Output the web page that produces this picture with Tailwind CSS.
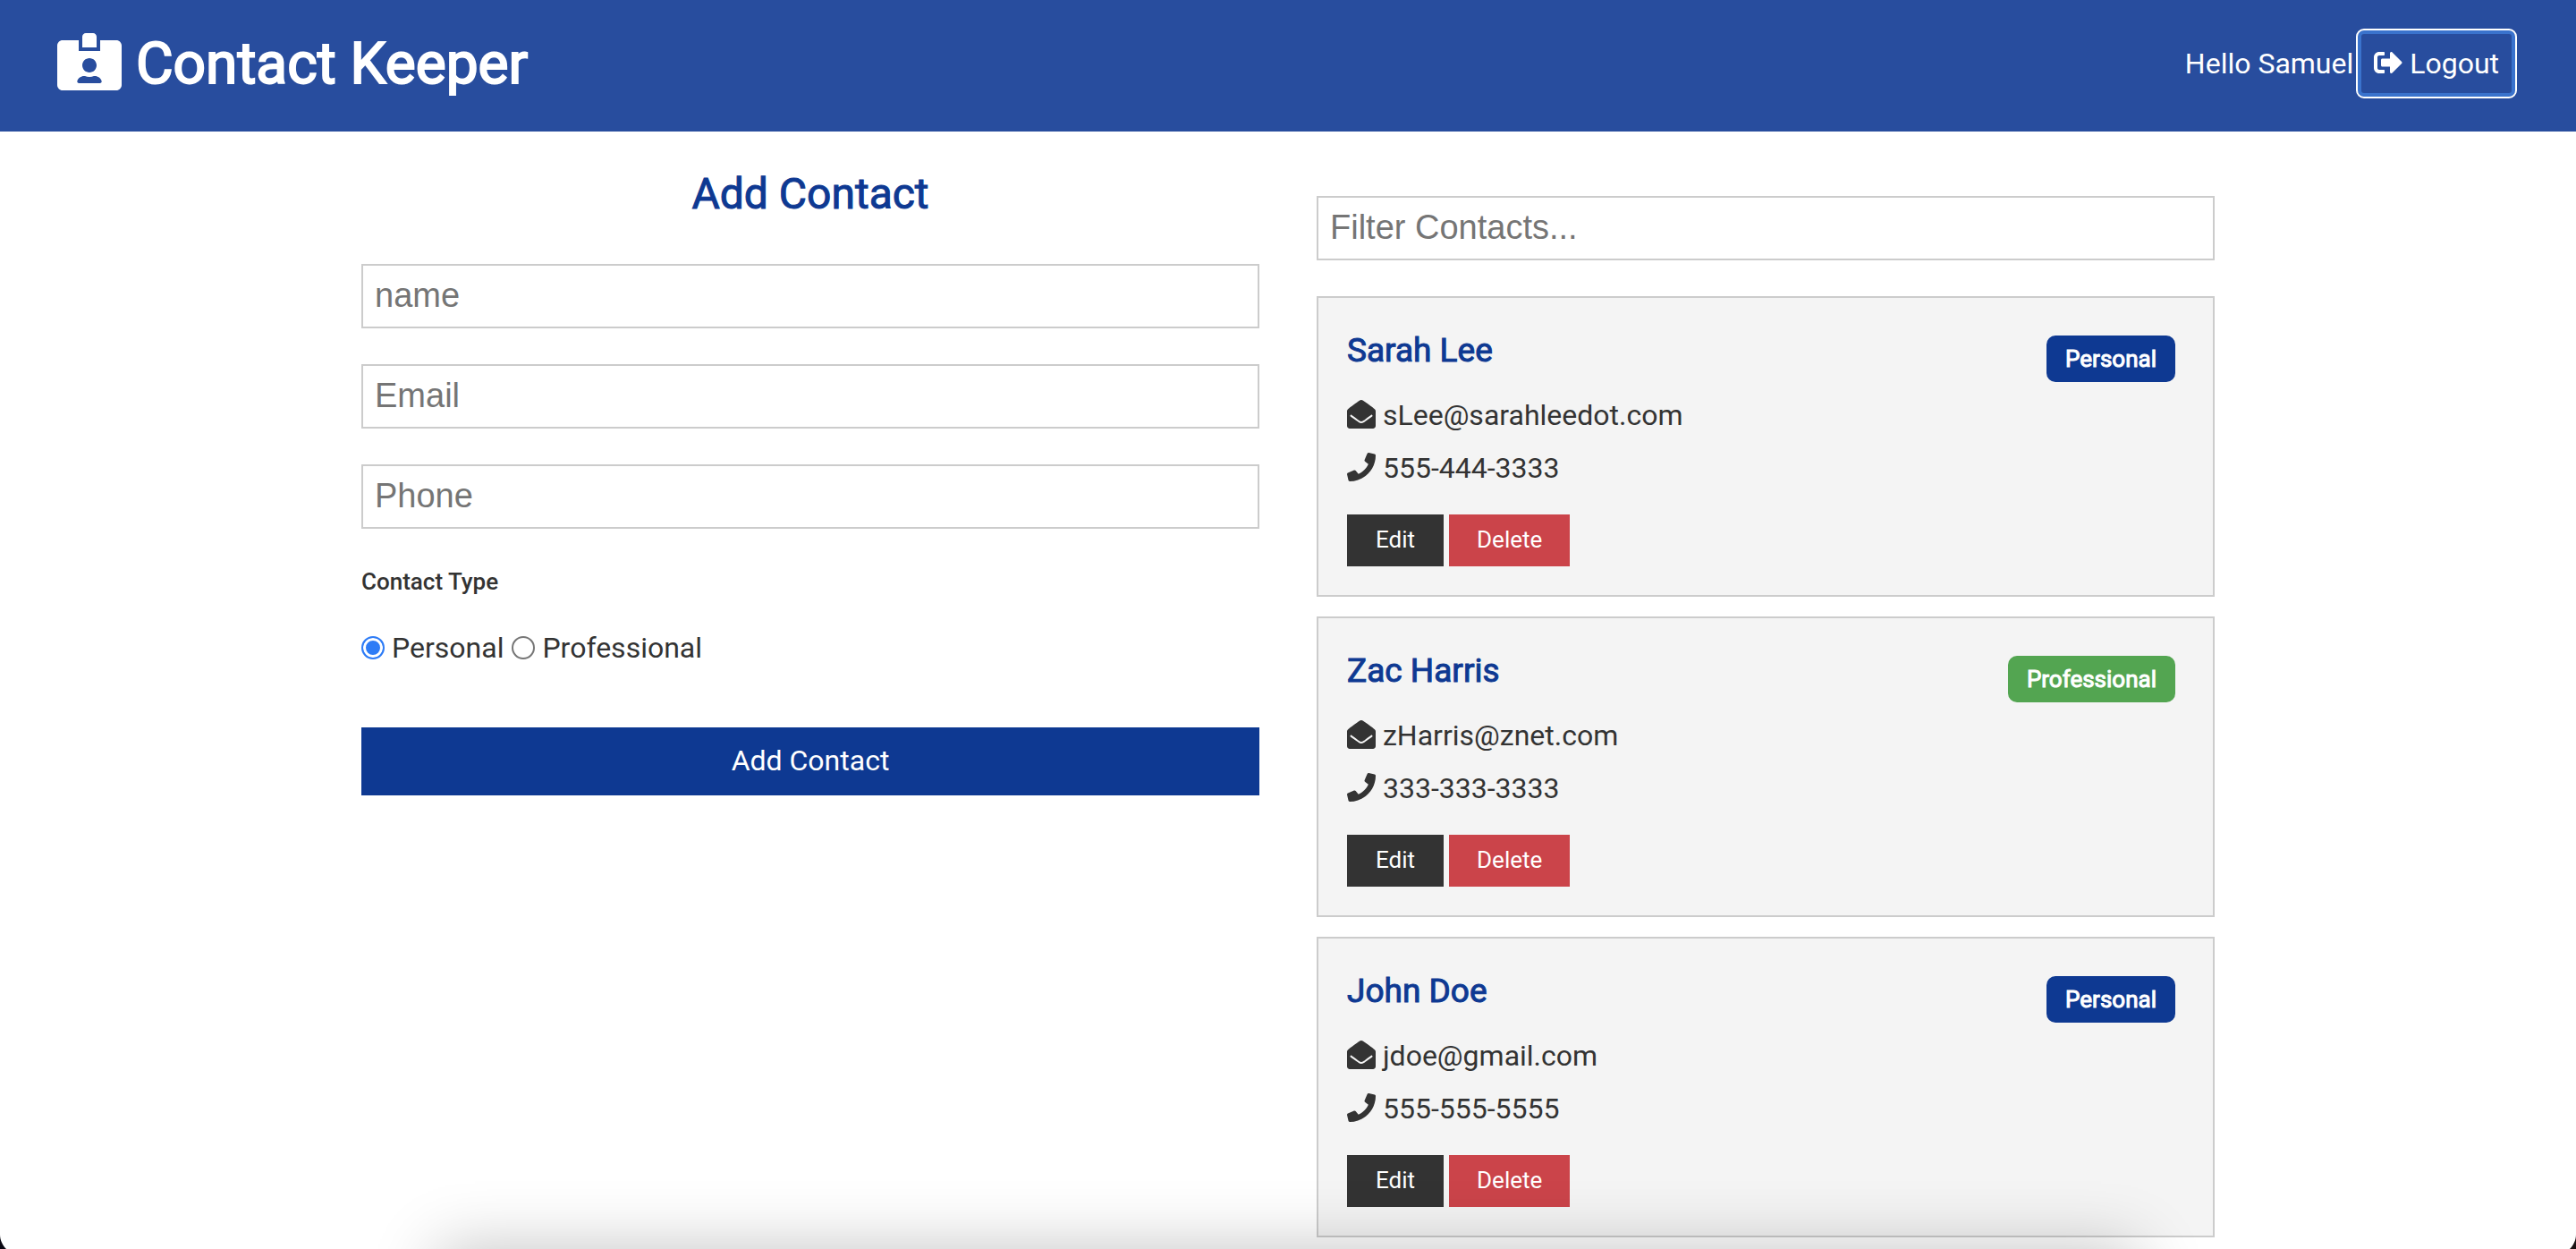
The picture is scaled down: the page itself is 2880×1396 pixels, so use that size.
<!DOCTYPE html>
<html lang="en">
<head>
<meta charset="utf-8">
<meta name="viewport" content="width=device-width, initial-scale=1">
<title>Contact Keeper</title>
<script src="https://cdn.jsdelivr.net/npm/@tailwindcss/browser@4"></script>
</head>
<body class="min-h-screen bg-white font-[Roboto,sans-serif] text-[32px] leading-[52px] text-[#333333]">

<!-- Icon sprite -->
<svg class="hidden" aria-hidden="true">
  <symbol id="id-card" viewBox="0 0 576 512"><path d="M528 64H384v96H192V64H48C21.5 64 0 85.5 0 112v352c0 26.5 21.5 48 48 48h480c26.5 0 48-21.5 48-48V112c0-26.5-21.5-48-48-48zM288 224c35.300 0 64 28.700 64 64s-28.700 64-64 64-64-28.700-64-64 28.700-64 64-64zm93.300 224H194.700c-10.400 0-18.800-10-15.600-19.800 8.300-25.600 32.400-44.200 60.900-44.200h8.200c12.300 5.100 25.700 8 39.800 8s27.600-2.900 39.800-8h8.200c28.400 0 52.500 18.500 60.900 44.200 3.200 9.900-5.200 19.800-15.600 19.800zM352 32c0-17.700-14.300-32-32-32h-64c-17.700 0-32 14.300-32 32v96h128V32z"/></symbol>
  <symbol id="sign-out" viewBox="0 0 512 512"><path d="M497 273L329 441c-15 15-41 4.500-41-17v-96H152c-13.300 0-24-10.700-24-24v-96c0-13.300 10.700-24 24-24h136V88c0-21.400 25.900-32 41-17l168 168c9.300 9.400 9.300 24.600 0 34zM192 436v-40c0-6.600-5.400-12-12-12H96c-17.700 0-32-14.300-32-32V160c0-17.700 14.300-32 32-32h84c6.600 0 12-5.400 12-12V76c0-6.600-5.400-12-12-12H96c-53 0-96 43-96 96v192c0 53 43 96 96 96h84c6.600 0 12-5.400 12-12z"/></symbol>
  <symbol id="envelope-open" viewBox="0 0 512 512"><path d="M512 464c0 26.510-21.490 48-48 48H48c-26.510 0-48-21.490-48-48V200.724a48 48 0 0 1 18.387-37.776c24.913-19.529 45.501-35.365 164.200-121.511C199.412 29.170 232.797-.347 256 .003c23.198-.354 56.596 29.172 73.413 41.433 118.687 86.137 139.303 101.995 164.200 121.512A48 48 0 0 1 512 200.724V464zm-65.666-196.605c-2.563-3.728-7.700-4.595-11.339-1.907-22.845 16.873-55.462 40.705-105.582 77.079-16.825 12.266-50.210 41.781-73.413 41.430-23.211.344-56.559-29.143-73.413-41.430-50.114-36.370-82.734-60.204-105.582-77.079-3.639-2.688-8.776-1.821-11.339 1.907l-9.072 13.196a7.998 7.998 0 0 0 1.839 10.967c22.887 16.899 55.454 40.690 105.303 76.868 20.274 14.781 56.524 47.813 92.264 47.573 35.724.242 71.961-32.771 92.263-47.573 49.850-36.179 82.418-59.970 105.303-76.868a7.998 7.998 0 0 0 1.839-10.967l-9.071-13.196z"/></symbol>
  <symbol id="phone-icon" viewBox="0 0 512 512"><path d="M493.400 24.600l-104-24c-11.300-2.600-22.900 3.300-27.500 13.900l-48 112c-4.200 9.800-1.400 21.300 6.900 28l60.600 49.600c-36 76.700-98.900 140.500-177.200 177.200l-49.600-60.600c-6.800-8.300-18.200-11.100-28-6.900l-112 48C3.900 366.500-2 378.100.600 389.400l24 104C27.100 504.200 36.700 512 48 512c256.100 0 464-207.500 464-464 0-11.200-7.700-20.900-18.600-23.400z"/></symbol>
</svg>

<header class="flex items-center justify-between bg-[#284d9e] px-16 pt-5 pb-6 text-white">
  <h1 class="text-[64px] leading-[103px] [-webkit-text-stroke:2px]"><svg class="inline-block h-16 w-[72px] fill-current align-[-8px] [-webkit-text-stroke:0]" aria-hidden="true"><use href="#id-card"/></svg> Contact Keeper</h1>
  <nav class="mr-[2px] mb-[2px] flex items-center gap-[3px]">
    <span>Hello Samuel</span>
    <a href="#" class="rounded-[9px] border-2 border-white px-[18px] py-[11px] inset-shadow-[0_0_0_4px_#3a73cd]"><svg class="inline-block size-8 fill-current align-[-4px]" aria-hidden="true"><use href="#sign-out"/></svg> Logout</a>
  </nav>
</header>

<main class="mx-auto grid max-w-[2200px] grid-cols-2 gap-16 px-16 pt-[41px]">
  <form>
    <h2 class="mb-[49px] text-center text-[48px] leading-[58px] text-[#0e3992] [-webkit-text-stroke:1px]">Add Contact</h2>
    <div class="flex flex-col gap-10">
      <input type="text" aria-label="Name" placeholder="name" class="w-full border-2 border-[#cccccc] px-[13px] pt-[11px] pb-[13px] font-['Liberation_Sans',Arial,sans-serif] text-[38px] leading-[44px] placeholder:text-[#757575]">
      <input type="email" aria-label="Email" placeholder="Email" class="w-full border-2 border-[#cccccc] px-[13px] pt-[11px] pb-[13px] font-['Liberation_Sans',Arial,sans-serif] text-[38px] leading-[44px] placeholder:text-[#757575]">
      <input type="tel" aria-label="Phone" placeholder="Phone" class="w-full border-2 border-[#cccccc] px-[13px] pt-[11px] pb-[13px] font-['Liberation_Sans',Arial,sans-serif] text-[38px] leading-[44px] placeholder:text-[#757575]">
    </div>
    <fieldset class="mt-[43px]">
      <legend class="mb-8 text-[26px] leading-8 font-medium">Contact Type</legend>
      <div class="flex gap-[9px]">
        <label class="flex items-center gap-2"><input type="radio" name="type" checked class="size-[26px] appearance-none rounded-full border-2 border-[#767676] checked:border-[#2e7cf6] checked:bg-[#2e7cf6] checked:inset-shadow-[0_0_0_3px_#ffffff]">Personal</label>
        <label class="flex items-center gap-2"><input type="radio" name="type" class="size-[26px] appearance-none rounded-full border-2 border-[#767676] checked:border-[#2e7cf6] checked:bg-[#2e7cf6] checked:inset-shadow-[0_0_0_3px_#ffffff]">Professional</label>
      </div>
    </fieldset>
    <button type="submit" class="mt-[63px] block w-full bg-[#0e3992] pt-[11px] pb-[13px] text-white">Add Contact</button>
  </form>

  <section class="pt-[31px]">
    <input type="search" aria-label="Filter contacts" placeholder="Filter Contacts..." class="mb-10 block w-full border-2 border-[#cccccc] px-[13px] pt-[11px] pb-[13px] font-['Liberation_Sans',Arial,sans-serif] text-[38px] leading-[44px] placeholder:text-[#757575]">
    <div class="flex flex-col gap-[22px]">
      <article class="border-2 border-[#cccccc] bg-[#f4f4f4] p-8">
        <div class="flex items-start justify-between">
          <h3 class="text-[37px] leading-[54px] text-[#0e3992] [-webkit-text-stroke:1px]">Sarah Lee</h3>
          <span class="mt-[10px] mr-[10px] rounded-[10px] bg-[#0e3992] px-[21px] py-[6px] text-[26px] leading-10 text-white [-webkit-text-stroke:1px]">Personal</span>
        </div>
        <ul class="mt-[11px] flex flex-col gap-[7px]">
          <li><svg class="inline-block size-8 fill-current align-[-4px]" aria-hidden="true"><use href="#envelope-open"/></svg> sLee@sarahleedot.com</li>
          <li><svg class="inline-block size-8 fill-current align-[-4px]" aria-hidden="true"><use href="#phone-icon"/></svg> 555-444-3333</li>
        </ul>
        <div class="mt-[26px] flex gap-[6px] text-[26px] leading-[42px] text-white">
          <button type="button" class="bg-[#333333] px-8 pt-[7px] pb-[9px]">Edit</button>
          <button type="button" class="bg-[#cb444a] px-[31px] pt-[7px] pb-[9px]">Delete</button>
        </div>
      </article>
      <article class="border-2 border-[#cccccc] bg-[#f4f4f4] p-8">
        <div class="flex items-start justify-between">
          <h3 class="text-[37px] leading-[54px] text-[#0e3992] [-webkit-text-stroke:1px]">Zac Harris</h3>
          <span class="mt-[10px] mr-[10px] rounded-[10px] bg-[#53a551] px-[21px] py-[6px] text-[26px] leading-10 text-white [-webkit-text-stroke:1px]">Professional</span>
        </div>
        <ul class="mt-[11px] flex flex-col gap-[7px]">
          <li><svg class="inline-block size-8 fill-current align-[-4px]" aria-hidden="true"><use href="#envelope-open"/></svg> zHarris@znet.com</li>
          <li><svg class="inline-block size-8 fill-current align-[-4px]" aria-hidden="true"><use href="#phone-icon"/></svg> 333-333-3333</li>
        </ul>
        <div class="mt-[26px] flex gap-[6px] text-[26px] leading-[42px] text-white">
          <button type="button" class="bg-[#333333] px-8 pt-[7px] pb-[9px]">Edit</button>
          <button type="button" class="bg-[#cb444a] px-[31px] pt-[7px] pb-[9px]">Delete</button>
        </div>
      </article>
      <article class="border-2 border-[#cccccc] bg-[#f4f4f4] p-8">
        <div class="flex items-start justify-between">
          <h3 class="text-[37px] leading-[54px] text-[#0e3992] [-webkit-text-stroke:1px]">John Doe</h3>
          <span class="mt-[10px] mr-[10px] rounded-[10px] bg-[#0e3992] px-[21px] py-[6px] text-[26px] leading-10 text-white [-webkit-text-stroke:1px]">Personal</span>
        </div>
        <ul class="mt-[11px] flex flex-col gap-[7px]">
          <li><svg class="inline-block size-8 fill-current align-[-4px]" aria-hidden="true"><use href="#envelope-open"/></svg> jdoe@gmail.com</li>
          <li><svg class="inline-block size-8 fill-current align-[-4px]" aria-hidden="true"><use href="#phone-icon"/></svg> 555-555-5555</li>
        </ul>
        <div class="mt-[26px] flex gap-[6px] text-[26px] leading-[42px] text-white">
          <button type="button" class="bg-[#333333] px-8 pt-[7px] pb-[9px]">Edit</button>
          <button type="button" class="bg-[#cb444a] px-[31px] pt-[7px] pb-[9px]">Delete</button>
        </div>
      </article>
    </div>
  </section>
</main>

<!-- Shade and rounded corners along the bottom edge of the window -->
<div class="pointer-events-none fixed inset-x-0 bottom-0 h-[120px] overflow-hidden" aria-hidden="true">
  <div class="absolute inset-x-[17%] top-full h-[300px] shadow-[0_0_70px_rgba(0,0,0,0.24)]"></div>
  <svg class="absolute bottom-0 left-0 h-4 w-2 fill-[#0b0a14]" viewBox="0 0 8 16"><path d="M0 0C0 6 3 12 7 16H0Z"/></svg>
  <svg class="absolute right-0 bottom-0 h-4 w-2 fill-[#1a1214]" viewBox="0 0 8 16"><path d="M8 0C8 6 5 12 1 16H8Z"/></svg>
</div>
</body>
</html>
